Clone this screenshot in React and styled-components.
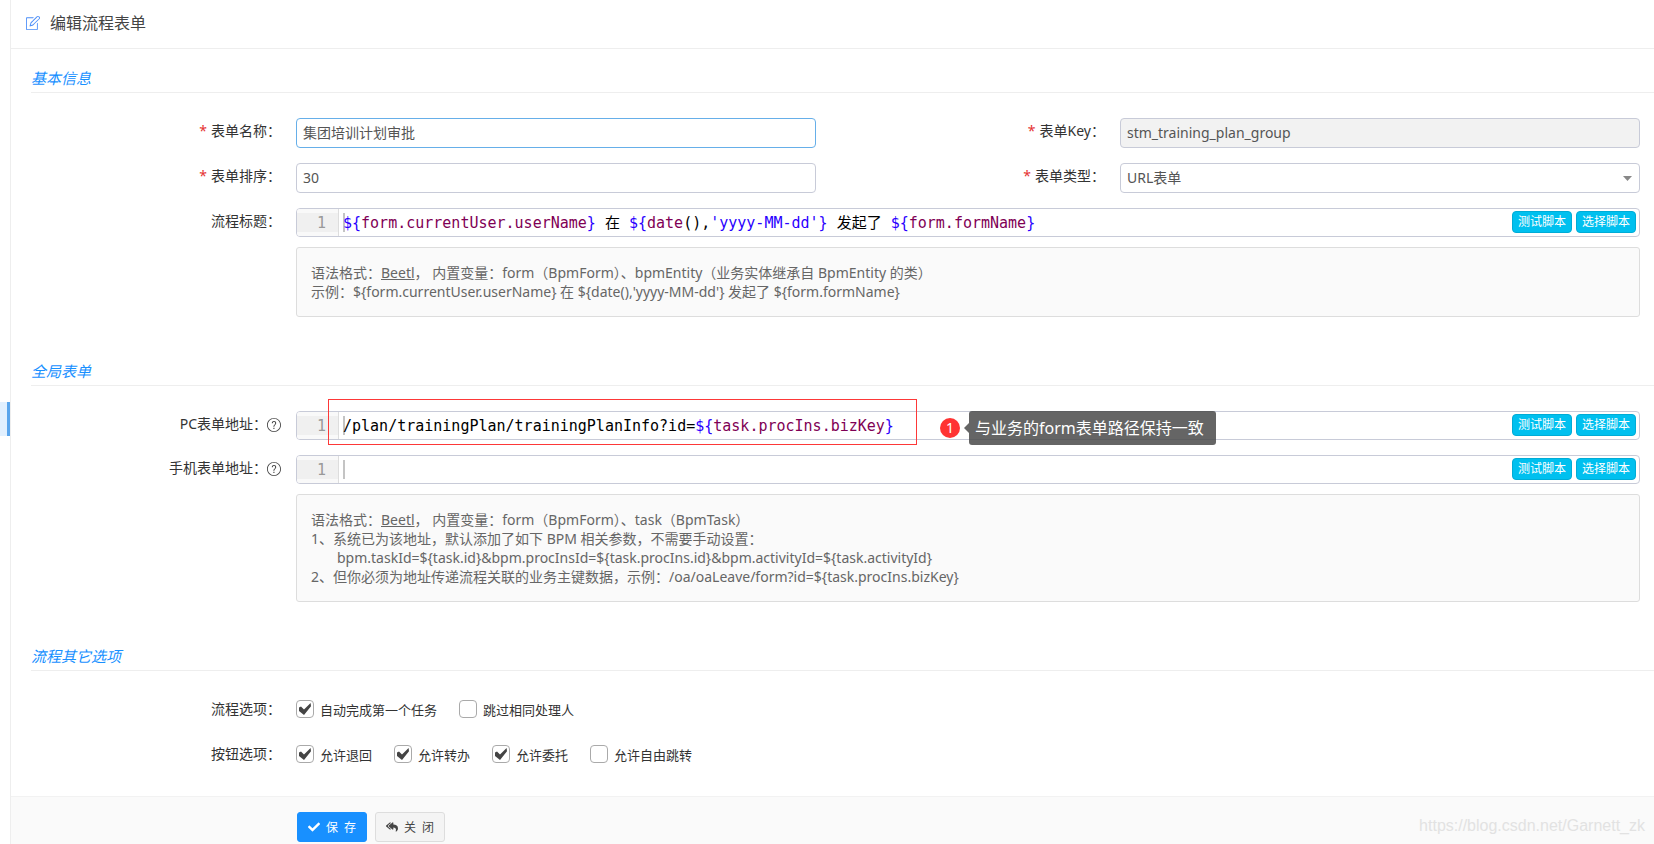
import { useState } from 'react';
import styled, { createGlobalStyle, css } from 'styled-components';
import { FaCheck, FaReplyAll } from 'react-icons/fa';
import { SlNote, SlQuestion } from 'react-icons/sl';

const GlobalStyle = createGlobalStyle`
  * {
    box-sizing: border-box;
  }
  body {
    margin: 0;
    background: #fff;
    color: #333;
    font-family: 'Noto Sans', 'Noto Sans CJK SC', sans-serif;
    font-size: 14px;
    line-height: 20px;
  }
  input, select, button {
    font-family: inherit;
  }
`;

const Page = styled.div`
  display: flex;
  min-height: 100vh;
`;
const Rail = styled.aside`
  flex: 0 0 11px;
  border-right: 1px solid #eee;
`;
const RailMarker = styled.div`
  height: 34px;
  margin-top: 402px;
  background: #e1f0ff;
  border-right: 3px solid #5aa5ec;
`;
const Main = styled.main`
  flex: 1;
  min-width: 0;
  display: flex;
  flex-direction: column;
`;
const Header = styled.header`
  display: flex;
  align-items: center;
  gap: 10px;
  height: 49px;
  padding: 0 15px 2px;
  border-bottom: 1px solid #eee;
  svg {
    width: 14px;
    height: 14px;
    color: #4a8df8;
  }
`;
const Title = styled.h1`
  margin: 0;
  font-size: 16px;
  font-weight: 400;
  line-height: 24px;
  color: #444;
`;
const Section = styled.section`
  padding-top: ${({ $first }) => ($first ? '18px' : '43px')};
`;
const SectionTitle = styled.h2`
  margin: 0 0 25px 20px;
  padding-bottom: 2px;
  border-bottom: 1px solid #eee;
  font-size: 15px;
  font-style: italic;
  font-weight: 400;
  line-height: 23px;
  color: #1890ff;
`;
const Fields = styled.div`
  display: grid;
  grid-template-columns: 1fr 1fr;
  gap: 15px 19px;
  padding-right: 14px;
`;
const Field = styled.div`
  display: flex;
  ${({ $wide }) => $wide && 'grid-column: 1 / -1;'}
`;
const labelStyle = css`
  flex: 0 0 285px;
  display: flex;
  justify-content: flex-end;
  padding: 3px 15px 0 0;
`;
const Label = styled.label`
  ${labelStyle}
  svg {
    width: 14px;
    height: 14px;
    margin-top: 4px;
    color: #444;
  }
`;
const GroupLabel = styled.span`
  ${labelStyle}
`;
const Star = styled.span`
  margin-right: 4px;
  color: #e53333;
`;
const Control = styled.div`
  position: relative;
  flex: 1;
  min-width: 0;
`;
const boxStyle = css`
  display: block;
  width: 100%;
  height: 30px;
  padding: 0 6px 2px;
  border: 1px solid #c8cbd8;
  border-radius: 4px;
  background: #fff;
  color: #555;
  font-size: 14px;
  outline: none;
`;
const TextInput = styled.input`
  ${boxStyle}
  ${({ $active }) => $active && 'border-color: #66afe9;'}
  &:read-only {
    background: #f2f2f2;
  }
`;
const Select = styled.select`
  ${boxStyle}
  appearance: none;
`;
const Caret = styled.svg`
  position: absolute;
  right: 8px;
  top: 13px;
  width: 9px;
  height: 5px;
  fill: #888;
  pointer-events: none;
`;
const EditorBox = styled.div`
  display: flex;
  height: 29px;
  border: 1px solid #c8cbd8;
  border-radius: 4px;
  font-family: 'DejaVu Sans Mono', 'Noto Sans CJK SC', monospace;
  font-size: 15px;
  line-height: 21px;
`;
const Gutter = styled.div`
  flex: 0 0 42px;
  padding: 4px 0;
  border-right: 1px solid #ddd;
  border-radius: 3px 0 0 3px;
  background: #f9f9f9;
`;
const LineNumber = styled.div`
  height: 19px;
  padding-right: 12px;
  background: #f0f0f0;
  color: #999;
  text-align: right;
`;
const Code = styled.div`
  flex: 1;
  height: 19px;
  margin: 4px 0 0 4px;
  white-space: pre;
  color: #000;
  outline: none;
  box-shadow: inset 2px 0 0 #c4c4c4;
`;
const Mark = styled.span`
  color: #2a00ff;
`;
const Name = styled.span`
  color: #7f0055;
`;
const EditorTools = styled.div`
  display: flex;
  gap: 4px;
  padding: 2px 3px;
`;
const ScriptButton = styled.button`
  width: 60px;
  height: 22px;
  padding: 0;
  border: 1px solid #00acd6;
  border-radius: 4px;
  background: #00c0ef;
  color: #fff;
  font-size: 12px;
  line-height: 20px;
`;
const Hint = styled.div`
  margin-top: 10px;
  padding: 15px 14px;
  border: 1px solid #ddd;
  border-radius: 3px;
  background: #fafafa;
  color: #666;
  line-height: 19px;
  p {
    margin: 0;
  }
  a {
    color: inherit;
  }
`;
const IndentedLine = styled.p`
  && {
    padding-left: 26px;
  }
`;
const Checks = styled.div`
  display: flex;
  gap: 22px;
  padding-top: 4px;
`;
const CheckLabel = styled.label`
  position: relative;
  display: flex;
  gap: 6px;
  height: 26px;
  font-size: 13px;
  svg {
    position: absolute;
    left: 3px;
    top: 3px;
    width: 12px;
    height: 12px;
    fill: #444;
    pointer-events: none;
  }
`;
const CheckInput = styled.input`
  appearance: none;
  width: 18px;
  height: 18px;
  margin: 0;
  border: 1px solid #aaa;
  border-radius: 4px;
  background: #fff;
`;
const Footer = styled.footer`
  flex: 1;
  display: flex;
  gap: 8px;
  margin-top: 25px;
  padding: 15px 9px 2px 286px;
  border-top: 1px solid #f2f2f2;
  background: #fafafa;
`;
const FooterButton = styled.button`
  display: flex;
  align-items: center;
  justify-content: center;
  gap: 6px;
  width: 70px;
  height: 30px;
  padding: 0;
  border: 1px solid ${({ $primary }) => ($primary ? '#1890ff' : '#ddd')};
  border-radius: 3px;
  background: ${({ $primary }) => ($primary ? '#1890ff' : '#f4f4f4')};
  color: ${({ $primary }) => ($primary ? '#fff' : '#444')};
  font-size: 12px;
  svg {
    width: 12px;
    height: 12px;
  }
`;
const SourceNote = styled.span`
  margin: 4px 0 0 auto;
  color: #e2e2e2;
  font-family: 'Liberation Sans', sans-serif;
  font-size: 16px;
`;

/* Callout drawn over the PC address editor */
const Annotation = styled.div`
  position: absolute;
  left: 32px;
  top: -12px;
  display: flex;
  align-items: flex-end;
  pointer-events: none;
`;
const Frame = styled.div`
  width: 589px;
  height: 46px;
  border: 1px solid #fd3838;
`;
const Step = styled.div`
  width: 20px;
  height: 20px;
  margin: 0 4px 7px 23px;
  border-radius: 50%;
  background: #ff3333;
  color: #fff;
  font-size: 14px;
  text-align: center;
`;
const Arrow = styled.div`
  margin-bottom: 12px;
  border: 5px solid transparent;
  border-left: 0;
  border-right-color: rgba(76, 76, 76, 0.86);
`;
const Callout = styled.div`
  width: 247px;
  padding: 5px 6px;
  border-radius: 3px;
  background: rgba(76, 76, 76, 0.86);
  color: #fff;
  font-size: 16px;
  line-height: 24px;
  white-space: nowrap;
`;

const flowOptions = [
  { id: 'autoFirst', text: '自动完成第一个任务', on: true },
  { id: 'skipSame', text: '跳过相同处理人', on: false },
];
const buttonOptions = [
  { id: 'allowBack', text: '允许退回', on: true },
  { id: 'allowTurn', text: '允许转办', on: true },
  { id: 'allowDelegate', text: '允许委托', on: true },
  { id: 'allowJump', text: '允许自由跳转', on: false },
];

const Check = ({ id, text, on }) => {
  const [checked, setChecked] = useState(on);
  return (
    <CheckLabel htmlFor={id}>
      <CheckInput
        id={id}
        type="checkbox"
        checked={checked}
        onChange={(e) => setChecked(e.target.checked)}
      />
      {checked && (
        <svg viewBox="0 0 12 12"><path d="M0 4.6 2 3.4 5 6.6 11.6 0 12 3.2 5 12 0 8z" /></svg>
      )}
      {text}
    </CheckLabel>
  );
};

const CheckRow = ({ label, options }) => (
  <Field $wide role="group" aria-label={label}>
    <GroupLabel>{`${label}：`}</GroupLabel>
    <Checks>
      {options.map((option) => <Check key={option.id} {...option} />)}
    </Checks>
  </Field>
);

const Editor = ({ id, children }) => (
  <EditorBox>
    <Gutter><LineNumber>1</LineNumber></Gutter>
    <Code id={id} role="textbox" aria-labelledby={`${id}-label`} tabIndex={0}>{children}</Code>
    <EditorTools>
      <ScriptButton type="button">测试脚本</ScriptButton>
      <ScriptButton type="button">选择脚本</ScriptButton>
    </EditorTools>
  </EditorBox>
);

const Expr = ({ children }) => (
  <>
    <Mark>{'${'}</Mark>
    <Name>{children}</Name>
    <Mark>{'}'}</Mark>
  </>
);

const App = () => (
  <>
    <GlobalStyle />
    <Page>
      <Rail><RailMarker /></Rail>
      <Main>
        <Header>
          <SlNote />
          <Title>编辑流程表单</Title>
        </Header>

        <Section $first>
          <SectionTitle>基本信息</SectionTitle>
          <Fields>
            <Field>
              <Label htmlFor="formName"><Star>*</Star>表单名称：</Label>
              <Control><TextInput id="formName" $active defaultValue="集团培训计划审批" /></Control>
            </Field>
            <Field>
              <Label htmlFor="formKey"><Star>*</Star>表单Key：</Label>
              <Control><TextInput id="formKey" readOnly value="stm_training_plan_group" /></Control>
            </Field>
            <Field>
              <Label htmlFor="formSort"><Star>*</Star>表单排序：</Label>
              <Control><TextInput id="formSort" defaultValue="30" /></Control>
            </Field>
            <Field>
              <Label htmlFor="formType"><Star>*</Star>表单类型：</Label>
              <Control>
                <Select id="formType"><option>URL表单</option></Select>
                <Caret viewBox="0 0 9 5"><path d="M0 0h9L4.5 5z" /></Caret>
              </Control>
            </Field>
            <Field $wide>
              <Label as="span" id="flowTitle-label">流程标题：</Label>
              <Control>
                <Editor id="flowTitle">
                  <Expr>form.currentUser.userName</Expr>
                  {' 在 '}
                  <Mark>{'${'}</Mark>
                  <Name>date</Name>
                  {'(),'}
                  <Mark>{'\'yyyy-MM-dd\'}'}</Mark>
                  {' 发起了 '}
                  <Expr>form.formName</Expr>
                </Editor>
                <Hint>
                  <p>
                    语法格式：
                    <a href="#beetl">Beetl</a>
                    ， 内置变量：form（BpmForm）、bpmEntity（业务实体继承自 BpmEntity 的类）
                  </p>
                  <p>{'示例：${form.currentUser.userName} 在 ${date(),\'yyyy-MM-dd\'} 发起了 ${form.formName}'}</p>
                </Hint>
              </Control>
            </Field>
          </Fields>
        </Section>

        <Section>
          <SectionTitle>全局表单</SectionTitle>
          <Fields>
            <Field $wide>
              <Label as="span" id="pcUrl-label">PC表单地址：<SlQuestion /></Label>
              <Control>
                <Editor id="pcUrl">
                  /plan/trainingPlan/trainingPlanInfo?id=
                  <Expr>task.procIns.bizKey</Expr>
                </Editor>
                <Annotation>
                  <Frame />
                  <Step>1</Step>
                  <Arrow />
                  <Callout>与业务的form表单路径保持一致</Callout>
                </Annotation>
              </Control>
            </Field>
            <Field $wide>
              <Label as="span" id="mobileUrl-label">手机表单地址：<SlQuestion /></Label>
              <Control>
                <Editor id="mobileUrl" />
                <Hint>
                  <p>
                    语法格式：
                    <a href="#beetl">Beetl</a>
                    ， 内置变量：form（BpmForm）、task（BpmTask）
                  </p>
                  <p>1、系统已为该地址，默认添加了如下 BPM 相关参数，不需要手动设置：</p>
                  <IndentedLine>
                    {'bpm.taskId=${task.id}&bpm.procInsId=${task.procIns.id}&bpm.activityId=${task.activityId}'}
                  </IndentedLine>
                  <p>{'2、但你必须为地址传递流程关联的业务主键数据，示例：/oa/oaLeave/form?id=${task.procIns.bizKey}'}</p>
                </Hint>
              </Control>
            </Field>
          </Fields>
        </Section>

        <Section>
          <SectionTitle>流程其它选项</SectionTitle>
          <Fields>
            <CheckRow label="流程选项" options={flowOptions} />
            <CheckRow label="按钮选项" options={buttonOptions} />
          </Fields>
        </Section>

        <Footer>
          <FooterButton type="button" $primary>
            <FaCheck />
            保&ensp;存
          </FooterButton>
          <FooterButton type="button">
            <FaReplyAll />
            关&ensp;闭
          </FooterButton>
          <SourceNote>https://blog.csdn.net/Garnett_zk</SourceNote>
        </Footer>
      </Main>
    </Page>
  </>
);

export default App;
